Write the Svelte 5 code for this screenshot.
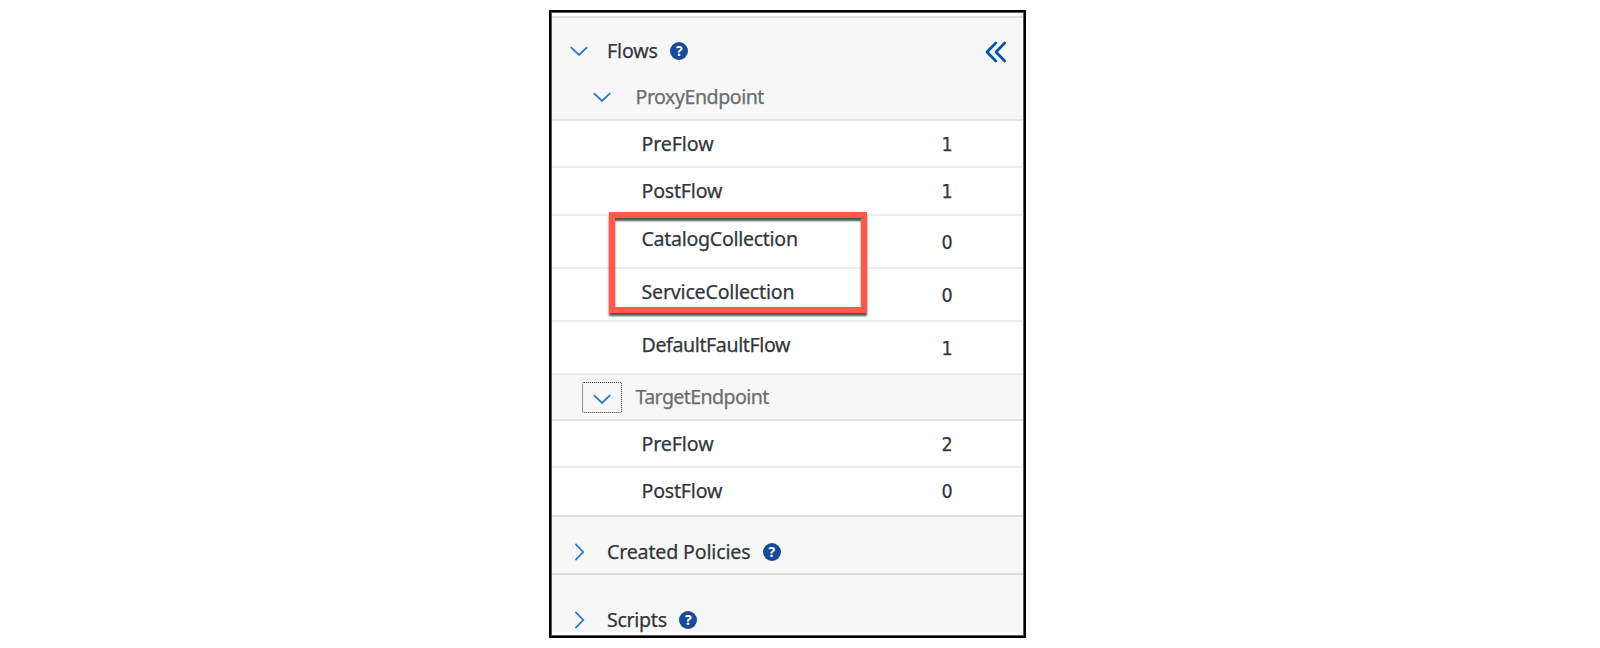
<script>
  const rows = [
    { kind: 'section', label: 'Flows', open: true, height: 62, pad: 21, spacing: -0.15, help: true, collapse: true, line: 'first' },
    { kind: 'endpoint', label: 'ProxyEndpoint', open: true, height: 43, pad: 7, spacing: -0.47, line: 'mid' },
    { kind: 'flow', label: 'PreFlow', count: 1, height: 47, pad: 10.5, drop: 1, spacing: -0.1 },
    { kind: 'flow', label: 'PostFlow', count: 1, height: 48, pad: 10.5, drop: 1, spacing: -0.2 },
    { kind: 'flow', label: 'CatalogCollection', count: 0, height: 53, pad: 10.5, drop: 4, spacing: -0.3 },
    { kind: 'flow', label: 'ServiceCollection', count: 0, height: 53, pad: 10.5, drop: 4, spacing: -0.2 },
    { kind: 'flow', label: 'DefaultFaultFlow', count: 1, height: 53, pad: 11, drop: 4, spacing: -0.39 },
    { kind: 'endpoint', label: 'TargetEndpoint', open: true, focused: true, height: 46, pad: 10, spacing: -0.6, line: 'mid' },
    { kind: 'flow', label: 'PreFlow', count: 2, height: 47, pad: 11, drop: 1, spacing: -0.1 },
    { kind: 'flow', label: 'PostFlow', count: 0, height: 49, pad: 11, drop: 1, spacing: -0.2, line: 'strong' },
    { kind: 'section', label: 'Created Policies', open: false, height: 58, pad: 23, spacing: -0.17, help: true, line: 'strong' },
    { kind: 'section', label: 'Scripts', open: false, height: 57, pad: 33, spacing: -0.3, help: true }
  ];
</script>

<main>
  <div class="panel">
    {#each rows as row}
      <div class="row {row.kind} {row.line ?? ''}" style:height="{row.height}px" style:padding-top="{row.pad}px">
        {#if row.kind !== 'flow'}
          <button class="toggle" class:focused={row.focused} aria-label={row.label} aria-expanded={row.open}>
            {#if row.open}
              <svg width="20" height="20" viewBox="0 0 20 20"><path d="M1.8 6.2 10 14 18.2 6.2" /></svg>
            {:else}
              <svg width="20" height="20" viewBox="0 0 20 20"><path d="M6.4 1.8 14.2 10 6.4 18.2" /></svg>
            {/if}
          </button>
        {/if}
        <span class="label" style:letter-spacing="{row.spacing}px">{row.label}</span>
        {#if row.help}
          <span class="help">?</span>
        {/if}
        {#if row.collapse}
          <svg class="collapse" width="22" height="22" viewBox="0 0 22 22"><path d="M10.8 2 2 11 10.8 20M19.8 2 11 11 19.8 20" /></svg>
        {/if}
        {#if row.kind === 'flow'}
          <span class="count" style:margin-top="{row.drop}px">{row.count}</span>
        {/if}
      </div>
    {/each}
    <div class="highlight"></div>
  </div>
</main>

<style>
  :global(body) { margin: 0; background: #fff; }
  main {
    height: 648px;
    box-sizing: border-box;
    padding: 10px 0 0 549px;
    overflow: hidden;
    font-family: "Noto Sans", sans-serif;
  }
  .panel {
    position: relative;
    box-sizing: border-box;
    width: 477px;
    height: 628px;
    padding-top: 4px;
    border: 2px solid #000;
    box-shadow: inset 0 0 0 1px #555;
    background: #fff;
  }
  .row {
    display: flex;
    align-items: flex-start;
    box-sizing: border-box;
    margin: 0 1px;
    font-size: 19.6px;
    line-height: 24px;
    color: #32363a;
    -webkit-text-stroke: 0.25px currentColor;
    border-bottom: 2px solid #ececec;
  }
  .section, .endpoint {
    background: #f7f7f7;
    box-shadow: inset -2px 0 #fff;
  }
  .section { border-bottom-width: 0; padding-left: 15px; }
  .first { border-top: 2px solid #dfdfdf; }
  .endpoint { padding-left: 29.5px; color: #6a6d70; }
  .flow { padding-left: 89.5px; }
  .mid { border-bottom: 2px solid #e2e2e2; }
  .strong { border-bottom: 2px solid #dcdcdc; }
  .toggle {
    display: flex;
    align-items: center;
    justify-content: center;
    box-sizing: border-box;
    flex: none;
    width: 40px;
    height: 32px;
    margin: -4px 0 0;
    padding: 0;
    border: 1px solid transparent;
    border-radius: 2px;
    background: none;
  }
  .section .toggle { width: 24px; margin-right: 16px; }
  .endpoint .toggle { margin-right: 14px; }
  .toggle.focused { height: 31px; margin-top: -3px; border: 1px dotted #333; }
  .toggle path { fill: none; stroke: #2b79c8; stroke-width: 1.8; }
  .focused svg { margin-top: 2px; }
  .label { white-space: nowrap; }
  .help {
    width: 18px;
    height: 18px;
    margin: 3px 0 0 12.5px;
    border-radius: 50%;
    background: #194a9a;
    color: #fff;
    font-size: 14px;
    font-weight: 700;
    line-height: 18px;
    text-align: center;
    -webkit-text-stroke: 0;
  }
  .collapse { margin: 2px 16px 0 auto; }
  .collapse path { fill: none; stroke: #0854a0; stroke-width: 2.7; stroke-linecap: round; stroke-linejoin: round; }
  .count {
    width: 12px;
    margin-left: auto;
    margin-right: 70px;
    font-family: "DejaVu Sans Condensed", "DejaVu Sans", sans-serif;
    font-stretch: condensed;
    font-size: 19.5px;
    text-align: center;
  }
  .highlight {
    position: absolute;
    box-sizing: border-box;
    left: 58px;
    top: 200px;
    width: 258px;
    height: 101px;
    border: 6.5px solid #ff594c;
    box-shadow: 0 3px 2px #555, inset 0 3px 2px #555;
  }
</style>
